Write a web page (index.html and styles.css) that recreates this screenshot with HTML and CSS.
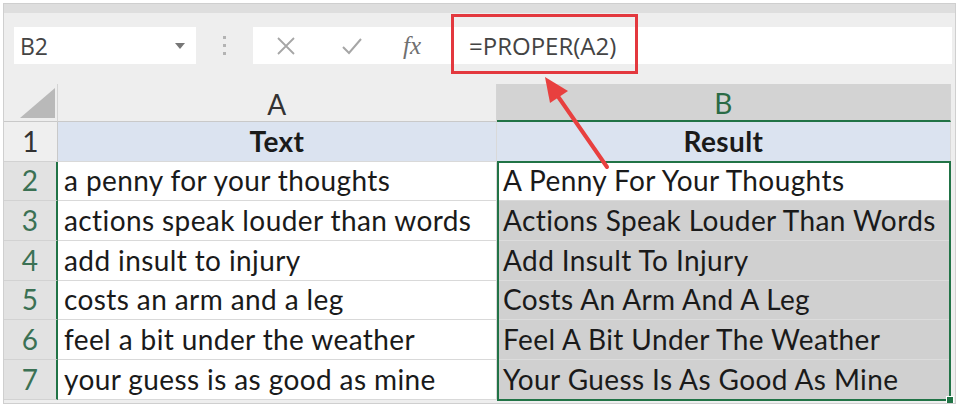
FILE: index.html
```html
<!DOCTYPE html>
<html>
<head>
    <title>PROPER function</title>
    <link rel="stylesheet" href="styles.css">
</head>
<body>
    <div class="window">
        <div class="title-strip"></div>

        <div class="formula-bar">
            <div class="name-box">
                <span>B2</span>
                <span class="caret"></span>
            </div>
            <div class="grip"><i></i><i></i><i></i></div>
            <div class="input">
                <span class="tool">
                    <svg width="20" height="20" viewBox="0 0 20 20"><path d="M2 2 L18 18 M18 2 L2 18" stroke="#a6a6a6" stroke-width="1.8" fill="none"/></svg>
                </span>
                <span class="tool">
                    <svg width="22" height="18" viewBox="0 0 22 18"><path d="M2 10 L8 16 L20 2" stroke="#a6a6a6" stroke-width="2" fill="none"/></svg>
                </span>
                <span class="tool fx">fx</span>
                <span class="formula">=PROPER(A2)</span>
            </div>
        </div>

        <div class="sheet">
            <div class="cell corner">
                <svg width="36" height="30" viewBox="0 0 36 30"><polygon points="35,0 35,30 0,30" fill="#b9b9b9"/></svg>
            </div>
            <div class="cell col-head">A</div>
            <div class="cell col-head on">B</div>

            <div class="cell row-head">1</div>
            <div class="cell title-cell">Text</div>
            <div class="cell title-cell">Result</div>

            <div class="cell row-head on">2</div>
            <div class="cell">a penny for your thoughts</div>
            <div class="cell">A Penny For Your Thoughts</div>

            <div class="cell row-head on">3</div>
            <div class="cell">actions speak louder than words</div>
            <div class="cell picked">Actions Speak Louder Than Words</div>

            <div class="cell row-head on">4</div>
            <div class="cell">add insult to injury</div>
            <div class="cell picked">Add Insult To Injury</div>

            <div class="cell row-head on">5</div>
            <div class="cell">costs an arm and a leg</div>
            <div class="cell picked">Costs An Arm And A Leg</div>

            <div class="cell row-head on">6</div>
            <div class="cell">feel a bit under the weather</div>
            <div class="cell picked">Feel A Bit Under The Weather</div>

            <div class="cell row-head on">7</div>
            <div class="cell">your guess is as good as mine</div>
            <div class="cell picked">Your Guess Is As Good As Mine</div>

            <div class="selection"><span class="handle"></span></div>
        </div>

        <div class="callout"></div>
        <svg class="arrow" width="951" height="399" viewBox="0 0 951 399">
            <line x1="603" y1="163" x2="553" y2="91" stroke="#e8403f" stroke-width="4" stroke-linecap="round"/>
            <polygon points="541,73 564,87 546,99" fill="#e8403f"/>
        </svg>
    </div>
</body>
</html>
```

FILE: styles.css
```css
body {
    margin: 0;
    background: #fff;
    font-family: Lato, "Liberation Sans", sans-serif;
}
.window {
    position: relative;
    width: 951px;
    height: 399px;
    margin: 3px 0 0 3px;
    border: 1px solid #cfcfcf;
    background: #eeeeee;
    overflow: hidden;
}
.title-strip {
    height: 9px;
    background: #dedede;
}
.formula-bar {
    display: flex;
    align-items: flex-start;
    height: 71px;
    padding: 14px 3px 0 10px;
    box-sizing: border-box;
}
.name-box {
    width: 182px;
    height: 37px;
    background: #fff;
    display: flex;
    align-items: center;
    justify-content: space-between;
    padding: 0 11px 0 6px;
    box-sizing: border-box;
    font-family: "Open Sans", sans-serif;
    font-size: 23px;
    color: #444;
}
.caret {
    width: 0;
    height: 0;
    border-left: 5px solid transparent;
    border-right: 5px solid transparent;
    border-top: 6px solid #777;
}
.grip {
    width: 57px;
    height: 37px;
    display: flex;
    flex-direction: column;
    align-items: center;
    justify-content: center;
    gap: 5px;
}
.grip i {
    width: 3px;
    height: 3px;
    background: #b3b3b3;
}
.input {
    flex: 1;
    height: 37px;
    background: #fff;
    display: flex;
    align-items: center;
}
.tool {
    width: 66px;
    display: flex;
    justify-content: center;
}
.fx {
    font-family: "Liberation Serif", serif;
    font-style: italic;
    font-size: 25px;
    color: #707070;
    margin-left: -6px;
}
.formula {
    padding-left: 24px;
    font-family: "Open Sans", sans-serif;
    font-size: 24px;
    color: #444;
}
.sheet {
    position: relative;
    display: grid;
    grid-template-columns: 54px 439px 454px;
    grid-template-rows: 38px repeat(7, 39.7px);
}
.cell {
    display: flex;
    align-items: flex-end;
    padding: 0 6px 3px;
    box-sizing: border-box;
    background: #fff;
    border-right: 1px solid #d9d9d9;
    border-bottom: 1px solid #d9d9d9;
    font-size: 28px;
    letter-spacing: 0.4px;
    color: #1a1a1a;
    white-space: nowrap;
}
.corner {
    background: #eeeeee;
    border-bottom: 1px solid #c9c9c9;
    border-right: 1px solid #d4d4d4;
    align-items: center;
    justify-content: flex-end;
    padding: 0 1px 0 0;
}
.col-head {
    background: #eeeeee;
    justify-content: center;
    align-items: center;
    padding: 2px 0 0;
    border-bottom: 1px solid #c9c9c9;
    border-right: 1px solid #d4d4d4;
    color: #333;
}
.col-head.on {
    background: #d3d3d3;
    border-bottom: 2px solid #217346;
    color: #2b6b45;
}
.row-head {
    background: #efefef;
    justify-content: center;
    padding: 0 0 3px;
    border-right: 1px solid #c9c9c9;
    border-bottom: 1px solid #d2d2d2;
    color: #333;
}
.row-head.on {
    background: #e2e2e2;
    border-right: 2px solid #217346;
    color: #3b7154;
}
.title-cell {
    background: #dbe3f0;
    justify-content: center;
    font-weight: bold;
}
.picked {
    background: #d0d0d0;
    border-bottom-color: #dcdcdc;
}
.selection {
    position: absolute;
    left: 493px;
    top: 77px;
    width: 454px;
    height: 240px;
    border: 2px solid #217346;
    box-sizing: border-box;
}
.handle {
    position: absolute;
    right: -5px;
    bottom: -5px;
    width: 6px;
    height: 6px;
    background: #217346;
    border: 1px solid #fff;
}
.callout {
    position: absolute;
    left: 447px;
    top: 10px;
    width: 187px;
    height: 60px;
    border: 3.5px solid #e3383e;
    box-sizing: border-box;
}
.arrow {
    position: absolute;
    left: 0;
    top: 0;
}
```
